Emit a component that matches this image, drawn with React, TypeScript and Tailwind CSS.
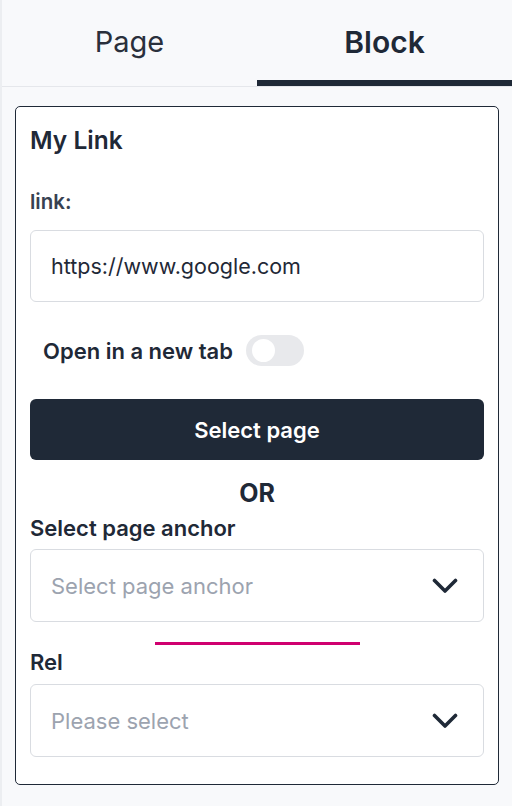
import React from "react";

function Chevron() {
  return (
    <svg width="26" height="16" viewBox="0 0 26 16" fill="none">
      <polyline points="2.5,2.5 13,13 23.5,2.5" stroke="#1f2937" strokeWidth="3.6" strokeLinecap="round" strokeLinejoin="round" />
    </svg>
  );
}

function SelectBox({ placeholder }: { placeholder: string }) {
  return (
    <div className="flex h-[73px] items-center justify-between rounded-[6px] border border-[#d9dce1] bg-white pl-[20px] pr-[25px]">
      <span className="text-[22px] leading-[28px] text-[#9ca3af]">{placeholder}</span>
      <Chevron />
    </div>
  );
}

export default function App() {
  return (
    <div
      className="flex h-[806px] w-[512px] flex-col border-l-2 border-[#eceef1] bg-[#f8f9fb] text-[#1f2937]"
      style={{ fontFamily: "Inter, 'Noto Sans', sans-serif" }}
    >
      <div className="flex h-[87px] border-b border-[#e5e7eb]">
        <div className="flex flex-1 items-center justify-center pb-[2px]">
          <span className="text-[29px] font-normal leading-[36px] text-[#2a303c]">Page</span>
        </div>
        <div className="relative flex flex-1 items-center justify-center pb-[2px]">
          <span className="text-[30px] font-semibold leading-[36px] text-[#1f2937]">Block</span>
          <div className="absolute bottom-0 left-0 right-0 h-[6px] bg-[#1f2937]" />
        </div>
      </div>
      <div className="px-[13px] pt-[19px]">
        <div className="flex flex-col rounded-[5px] border border-[#1f2937] bg-white px-[14px] pb-[27px] pt-[18px]">
          <div className="text-[24.5px] font-semibold leading-[30px]">My Link</div>
          <div className="mt-[35px] text-[20.5px] font-semibold leading-[24px] text-[#374151]">link:</div>
          <div className="mt-[16px] flex h-[72px] items-center rounded-[6px] border border-[#d9dce1] bg-white pl-[20px]">
            <span className="text-[21.5px] leading-[28px] text-[#1f2937]">https://www.google.com</span>
          </div>
          <div className="mt-[33px] flex h-[31px] items-center gap-[13px] pl-[13px]">
            <span className="text-[22px] font-semibold leading-[28px]">Open in a new tab</span>
            <div className="flex h-[31px] w-[58px] items-center rounded-full bg-[#e8e9ec] pl-[6px]">
              <div className="h-[23px] w-[23px] rounded-full bg-white" />
            </div>
          </div>
          <div className="mt-[33px] flex h-[61px] items-center justify-center rounded-[6px] bg-[#1f2937]">
            <span className="text-[22px] font-semibold leading-[28px] text-white">Select page</span>
          </div>
          <div className="mt-[19px] text-center text-[25px] font-bold leading-[28px]">OR</div>
          <div className="mt-[7px] text-[22px] font-semibold leading-[28px]">Select page anchor</div>
          <div className="mt-[7px]">
            <SelectBox placeholder="Select page anchor" />
          </div>
          <div className="mx-auto mt-[20px] h-[3px] w-[205px] bg-[#cf006f]" />
          <div className="mt-[3px] text-[22px] font-semibold leading-[28px]">Rel</div>
          <div className="mt-[8px]">
            <SelectBox placeholder="Please select" />
          </div>
        </div>
      </div>
    </div>
  );
}
